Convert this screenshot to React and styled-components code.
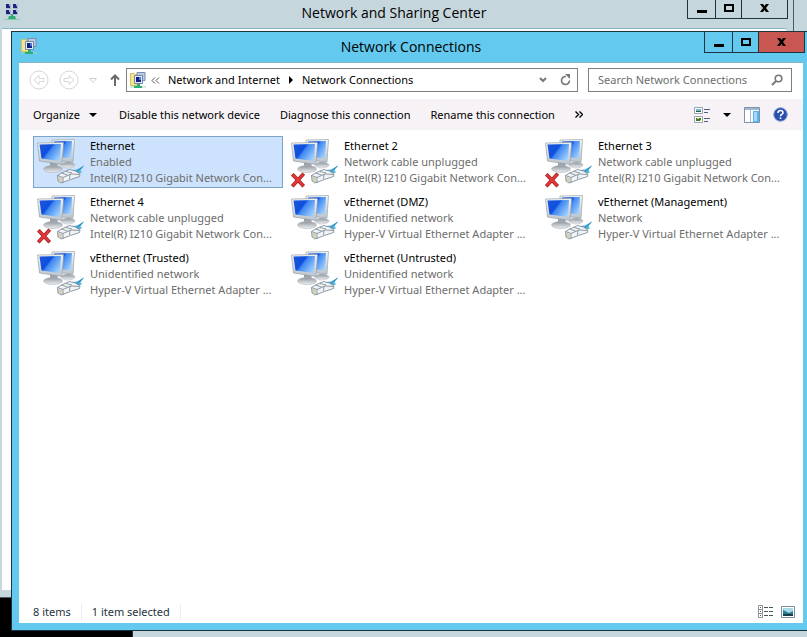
import React from 'react'
import styled, { createGlobalStyle, css } from 'styled-components'

const colors = {
    glass: '#c6d6dd',
    active: '#63c9ee',
    outline: '#1c3440',
    close: '#c75750',
    commandBar: '#f6f2f6',
    gray: '#6d6d6d',
}

const connections = [
    { name: 'Ethernet', status: 'Enabled', device: 'Intel(R) I210 Gigabit Network Con...', selected: true },
    { name: 'Ethernet 2', status: 'Network cable unplugged', device: 'Intel(R) I210 Gigabit Network Con...', unplugged: true },
    { name: 'Ethernet 3', status: 'Network cable unplugged', device: 'Intel(R) I210 Gigabit Network Con...', unplugged: true },
    { name: 'Ethernet 4', status: 'Network cable unplugged', device: 'Intel(R) I210 Gigabit Network Con...', unplugged: true },
    { name: 'vEthernet (DMZ)', status: 'Unidentified network', device: 'Hyper-V Virtual Ethernet Adapter ...' },
    { name: 'vEthernet (Management)', status: 'Network', device: 'Hyper-V Virtual Ethernet Adapter ...' },
    { name: 'vEthernet (Trusted)', status: 'Unidentified network', device: 'Hyper-V Virtual Ethernet Adapter ...' },
    { name: 'vEthernet (Untrusted)', status: 'Unidentified network', device: 'Hyper-V Virtual Ethernet Adapter ...' },
]

const GlobalStyle = createGlobalStyle`
    * {
        box-sizing: border-box;
    }

    body {
        margin: 0;
        background-color: #000;
        color: #000;
        font-family: "Noto Sans", "Open Sans", sans-serif;
        font-size: 11px;
        line-height: 16px;
    }

    button, input {
        font: inherit;
        color: inherit;
        margin: 0;
        padding: 0;
        border: 0;
        background: none;
    }

    svg {
        display: block;
        flex: none;
    }
`

const Desktop = styled.div`
    position: relative;
    height: 100vh;
    overflow: hidden;
`

const Window = styled.section`
    position: absolute;
    display: flex;
    flex-direction: column;
    border: 1px solid ${colors.outline};
    padding: 0 7px 7px;
    background-color: ${colors.glass};
`

const RearWindow = styled(Window)`
    top: -10px;
    right: -10px;
    bottom: -10px;
    left: 132px;
`

const SharingWindow = styled(Window)`
    top: -3px;
    right: 13px;
    bottom: 39px;
    left: -6px;
    border-color: #4d5c63;
`

const ConnectionsWindow = styled(Window)`
    top: 31px;
    right: -4px;
    bottom: 6px;
    left: 11px;
    background-color: ${colors.active};
`

const TitleBar = styled.header`
    display: grid;
    grid-template-columns: 1fr auto 1fr;
    height: 30px;
    flex: none;
`

const TitleIcon = styled.div`
    padding: 6px 2px;
`

const Title = styled.h1`
    margin: 0;
    font-family: "Open Sans", "Noto Sans", sans-serif;
    font-size: 14px;
    font-weight: 400;
    line-height: 30px;
`

const Caption = styled.div`
    display: flex;
    justify-self: end;
    align-self: start;
    height: 21px;
    margin-right: -2px;
    border: 1px solid ${colors.outline};
    border-top: 0;
`

const CaptionButton = styled.button`
    display: flex;
    align-items: center;
    justify-content: center;
    width: ${props => props.$wide ? '46px' : props.$mid ? '26px' : '27px'};
    background-color: ${props => props.$red ? colors.close : 'transparent'};

    & + & {
        border-left: 1px solid ${colors.outline};
    }
`

const Client = styled.div`
    display: flex;
    flex-direction: column;
    flex: 1;
    min-height: 0;
    border-top: 1px solid #86b4c6;
    background-color: #fff;
`

const NavBar = styled.nav`
    display: flex;
    align-items: center;
    height: 36px;
    padding: 0 11px 2px 10px;
    flex: none;
`

const NavButton = styled.button`
    display: flex;
    margin-right: ${props => props.$gap || '10px'};
`

const AddressBar = styled.div`
    display: flex;
    align-items: center;
    flex: 1;
    height: 24px;
    margin-right: 10px;
    padding: 0 6px 0 3px;
    border: 1px solid #7e7e82;
`

const Crumbs = styled.div`
    display: flex;
    align-items: center;
    flex: 1;
    gap: 8px;
    padding-left: 5px;
    white-space: nowrap;
`

const Crumb = styled.a`
    color: inherit;
    text-decoration: none;
`

const SearchBox = styled.label`
    display: flex;
    align-items: center;
    width: 204px;
    height: 24px;
    padding: 0 8px 0 9px;
    border: 1px solid #7e7e82;
`

const SearchInput = styled.input`
    flex: 1;
    min-width: 0;
    outline: none;

    &::placeholder {
        color: ${colors.gray};
        opacity: 1;
    }
`

const CommandBar = styled.div`
    display: flex;
    align-items: center;
    gap: 20px;
    height: 31px;
    padding: 0 15px 0 14px;
    background-color: ${colors.commandBar};
    white-space: nowrap;
    flex: none;
`

const Command = styled.button`
    display: flex;
    align-items: center;
    gap: 9px;
    margin-right: ${props => props.$menu ? '2px' : 0};
`

const ViewTools = styled.div`
    display: flex;
    align-items: center;
    gap: 13px;
    margin-left: auto;
`

const ConnectionList = styled.ul`
    display: grid;
    grid-template-columns: repeat(auto-fill, 250px);
    grid-auto-rows: 52px;
    gap: 4px;
    align-content: start;
    flex: 1;
    min-height: 0;
    margin: 0;
    padding: 6px 8px 6px 14px;
    list-style: none;
`

const ConnectionTile = styled.button`
    display: flex;
    gap: 5px;
    width: 100%;
    height: 52px;
    padding: 1px 6px 1px 3px;
    border: 1px solid transparent;
    text-align: left;

    ${props => props.$selected && css`
        border-color: #7ca6c8;
        background-color: #cde2fc;
    `}
`

const Lines = styled.span`
    flex: 1;
    min-width: 0;
`

const Line = styled.span`
    display: block;
    color: ${props => props.$strong ? '#000' : colors.gray};
    white-space: nowrap;
`

const StatusBar = styled.footer`
    display: flex;
    align-items: center;
    height: 23px;
    padding: 0 8px 0 14px;
    color: #1e3540;
    flex: none;
`

const StatusText = styled.span`
    margin-right: 10px;
    padding-right: 10px;
    border-right: 1px solid #ececf2;
`

const StatusViews = styled.div`
    display: flex;
    align-items: center;
    gap: 8px;
    margin-left: auto;
`

function FolderIcon() {
    return (
        <svg width="16" height="17" viewBox="0 0 16 17">
            <path d="M0.5 1.5h4l1 1h2v11h-7z" fill="#f5e68e" stroke="#d5bf62" />
            <path d="M7 .5h8v8H7z" fill="#bccbe2" stroke="#7a8eb2" />
            <path d="M4.500 3.500h8v8h-8z" fill="#e4ecf8" stroke="#7186ad" />
            <path d="M6 5h5v5H6z" fill="#151d86" />
            <path d="M9 5h2v3H9z" fill="#4c7cd2" />
            <path d="M7 12h3v2h2v2H4v-2h3z" fill="#2cae75" />
            <path d="M0 15h4M12 15h4" stroke="#a5d9c1" />
        </svg>
    )
}

function SharingIcon() {
    return (
        <svg width="16" height="17" viewBox="0 0 16 17">
            {[[2, 0], [9, 0], [2, 6], [9, 6]].map(([x, y]) => (
                <g key={`${x}-${y}`}>
                    <path d={`M${x} ${y}h5v5h-5z`} fill="#a8b3d4" />
                    <path d={`M${x} ${y}h3v2h1v2h-4z`} fill="#1c2378" />
                </g>
            ))}
            <path d="M7 10h2v2h2l1 3H4l1-3h2z" fill="#2cae75" />
            <path d="M0 15.500h16" stroke="#8cc9ad" />
        </svg>
    )
}

function NetworkIcon({ id, unplugged }) {
    return (
        <svg width="48" height="50" viewBox="0 0 48 50">
            <defs>
                <linearGradient id={`screen-${id}`} x1="0" y1="0.1" x2="1" y2="0.7">
                    <stop offset="0" stopColor="#1a56d8" />
                    <stop offset="0.42" stopColor="#0f4fe0" />
                    <stop offset="0.5" stopColor="#3f86f2" />
                    <stop offset="1" stopColor="#9fd0fc" />
                </linearGradient>
                <linearGradient id={`frame-${id}`} x1="0" y1="0" x2="0" y2="1">
                    <stop offset="0" stopColor="#f4f6f7" />
                    <stop offset="1" stopColor="#bcc4ca" />
                </linearGradient>
                <linearGradient id={`stand-${id}`} x1="0" y1="0" x2="0" y2="1">
                    <stop offset="0" stopColor="#8e969c" />
                    <stop offset="1" stopColor="#eef0f2" />
                </linearGradient>
            </defs>
            <ellipse cx="31" cy="27" rx="7" ry="3" fill={`url(#stand-${id})`} stroke="#b4babf" strokeWidth="0.500" />
            <path d="M15 2l22.500-.5-1.500 22.500-20-2z" fill={`url(#frame-${id})`} stroke="#9aa4ac" strokeWidth="0.700" />
            <path d="M17 3.500l18-.5-1 17.500-17-2z" fill={`url(#screen-${id})`} />
            <path d="M13 24h7l1 6h-8z" fill="#9aa2a8" />
            <ellipse cx="16" cy="31" rx="9.500" ry="3.500" fill={`url(#stand-${id})`} stroke="#aeb5ba" strokeWidth="0.600" />
            <path d="M.5 5l26-.5-1.500 22-22.500-3.500z" fill={`url(#frame-${id})`} stroke="#98a2aa" strokeWidth="0.700" />
            <path d="M2.500 6.500l21.500-.5-1 17-18.500-2.500z" fill={`url(#screen-${id})`} />
            <path d="M35 32l5-.5 6.500-3.500-3 4.500 1.500 2-5 1z" fill="#4fb0dc" />
            <path d="M39 34l7.500-6" stroke="#2387bb" />
            <path d="M20.500 37.500l4-2.500 8-3.500 6 1.500 4.500 3-.5 2.500-9 3-9.500 3.500-3-2z" fill="#f0f4f7" stroke="#75838f" strokeWidth="0.800" />
            <path d="M20.500 37.500l5.500 2v5.500M26 39.500l8-3.500 8.500 .5M24.500 35l6 2M33 36l-.5 5M29 33.500l6 1.500" fill="none" stroke="#75838f" strokeWidth="0.800" />
            <path d="M22 39v4M24 39.500v4.500" stroke="#b59b5a" strokeWidth="0.800" />
            {unplugged && (
                <g fill="none" strokeLinecap="square">
                    <path d="M2.500 37.500l9 9.500M11.500 37l-9 10" stroke="#9f1c1c" strokeWidth="3.600" />
                    <path d="M2.500 37.500l9 9.500M11.500 37l-9 10" stroke="#e5383a" strokeWidth="2.200" />
                </g>
            )}
        </svg>
    )
}

function ArrowCircle({ flip }) {
    return (
        <svg width="20" height="20" viewBox="0 0 20 20" fill="none" stroke="#d6d6d6">
            <circle cx="10" cy="10" r="9" />
            <path
                d={flip ? 'M15 10l-5-4.500v3H5v3h5v3z' : 'M5 10l5-4.500v3h5v3h-5v3z'}
            />
        </svg>
    )
}

function DownTriangle() {
    return (
        <svg width="8" height="4" viewBox="0 0 8 4">
            <path d="M0 0h8L4 4z" fill="#000" />
        </svg>
    )
}

function CaptionButtons({ active, label }) {
    return (
        <Caption>
            <CaptionButton aria-label={`Minimize ${label}`}>
                <svg width="10" height="11" viewBox="0 0 10 11">
                    <path d="M0 7h10v3H0z" />
                </svg>
            </CaptionButton>
            <CaptionButton $mid aria-label={`Maximize ${label}`}>
                <svg width="10" height="8" viewBox="0 0 10 8">
                    <path d="M1 1h8v6H1z" fill="none" stroke="#000" strokeWidth="2" />
                </svg>
            </CaptionButton>
            <CaptionButton $wide $red={active} aria-label={`Close ${label}`}>
                <svg width="9" height="8" viewBox="0 0 9 8">
                    <path d="M0 0h3l1.500 2L6 0h3L6 4l3 4H6L4.500 6 3 8H0l3-4z" />
                </svg>
            </CaptionButton>
        </Caption>
    )
}

function ConnectionItem({ id, name, status, device, selected, unplugged }) {
    return (
        <li>
            <ConnectionTile $selected={selected} aria-pressed={!!selected}>
                <NetworkIcon id={id} unplugged={unplugged} />
                <Lines>
                    <Line $strong>{name}</Line>
                    <Line>{status}</Line>
                    <Line>{device}</Line>
                </Lines>
            </ConnectionTile>
        </li>
    )
}

function Navigation() {
    return (
        <NavBar>
            <NavButton aria-label="Back"><ArrowCircle /></NavButton>
            <NavButton aria-label="Forward"><ArrowCircle flip /></NavButton>
            <NavButton $gap="13px" aria-label="Recent locations">
                <svg width="8" height="5" viewBox="0 0 8 5" fill="none" stroke="#cfcfcf">
                    <path d="M.5 .5h7L4 4.500z" />
                </svg>
            </NavButton>
            <NavButton $gap="6px" aria-label="Up">
                <svg width="10" height="12" viewBox="0 0 10 12" fill="none" stroke="#6b6b6b" strokeWidth="2">
                    <path d="M5 12V1.500M1 5.500l4-4 4 4" />
                </svg>
            </NavButton>
            <AddressBar>
                <FolderIcon />
                <Crumbs>
                    <svg width="9" height="7" viewBox="0 0 9 7" fill="none" stroke="#555">
                        <path d="M4 .5l-3 3 3 3M8 .5l-3 3 3 3" />
                    </svg>
                    <Crumb href="#network">Network and Internet</Crumb>
                    <svg width="6" height="8" viewBox="0 0 6 8">
                        <path d="M1 0l4 4-4 4z" />
                    </svg>
                    <Crumb href="#connections">Network Connections</Crumb>
                </Crumbs>
                <NavButton $gap="13px" aria-label="Previous locations">
                    <svg width="8" height="6" viewBox="0 0 8 6" fill="none" stroke="#777" strokeWidth="2">
                        <path d="M1 1l3 3 3-3" />
                    </svg>
                </NavButton>
                <NavButton $gap="0" aria-label="Refresh">
                    <svg width="11" height="12" viewBox="0 0 11 12">
                        <path d="M6 2.500A4 4 0 1 0 9.500 6.500" fill="none" stroke="#777" strokeWidth="1.600" />
                        <path d="M5 0h5v5z" fill="#777" />
                    </svg>
                </NavButton>
            </AddressBar>
            <SearchBox>
                <SearchInput type="text" placeholder="Search Network Connections" aria-label="Search Network Connections" />
                <svg width="12" height="12" viewBox="0 0 12 12" fill="none" stroke="#777">
                    <circle cx="7.500" cy="4.500" r="3.300" strokeWidth="1.600" />
                    <path d="M5 7l-4 4" strokeWidth="2" />
                </svg>
            </SearchBox>
        </NavBar>
    )
}

function Commands() {
    return (
        <CommandBar>
            <Command $menu>
                Organize
                <DownTriangle />
            </Command>
            <Command>Disable this network device</Command>
            <Command>Diagnose this connection</Command>
            <Command>Rename this connection</Command>
            <Command aria-label="More commands">
                <svg width="8" height="7" viewBox="0 0 8 7" fill="none" stroke="#000" strokeWidth="1.400">
                    <path d="M.5 .5l3 3-3 3M4.500 .5l3 3-3 3" />
                </svg>
            </Command>
            <ViewTools>
                <Command aria-label="Change your view">
                    <svg width="16" height="16" viewBox="0 0 16 16">
                        <path d="M.5 .5h8v6h-8zM.5 9.500h8v6h-8z" fill="#fff" stroke="#9aa5b0" />
                        <path d="M2 2h5v2H2z" fill="#77b5dc" />
                        <path d="M2 4h5v1H2z" fill="#25642f" />
                        <path d="M2 11h5v3H2z" fill="#3e7a2c" />
                        <path d="M3 11h2v1H3zM6 13h1v1H6z" fill="#e0d94e" />
                        <path d="M10 2.500h6M10 5.500h4M10 11.500h6M10 14.500h4" stroke="#4f6183" />
                    </svg>
                </Command>
                <Command aria-label="More view options"><DownTriangle /></Command>
                <Command aria-label="Show the preview pane">
                    <svg width="16" height="16" viewBox="0 0 16 16">
                        <path d="M.5 .5h15v15H.5z" fill="#fff" stroke="#7c93ab" />
                        <path d="M1 1h14v2H1z" fill="#9db8d0" />
                        <path d="M6.500 3v12" stroke="#a6b8c8" />
                        <path d="M9 4h6v11H9z" fill="#5ab3ee" />
                        <path d="M10 5h3v9h-3z" fill="#a6daf8" />
                    </svg>
                </Command>
                <Command aria-label="Get help">
                    <svg width="15" height="15" viewBox="0 0 15 15">
                        <circle cx="7.500" cy="7.500" r="6.800" fill="#2a4fae" stroke="#8ba2d3" />
                        <path d="M5 6q0-2.500 2.500-2.500T10 5.700q0 1-1.300 1.700T7.500 9.200M7.500 10.500v1.500" fill="none" stroke="#fff" strokeWidth="1.600" />
                    </svg>
                </Command>
            </ViewTools>
        </CommandBar>
    )
}

function Status() {
    return (
        <StatusBar>
            <StatusText>{connections.length} items</StatusText>
            <StatusText>1 item selected</StatusText>
            <StatusViews>
                <Command aria-label="Details view">
                    <svg width="15" height="13" viewBox="0 0 15 13" fill="none">
                        <path d="M.5 .5h4v4h-4zM.5 4.500h4v4h-4zM.5 8.500h4v4h-4z" stroke="#8c9398" />
                        <path d="M2 2.500h1M2 6.500h1M2 10.500h1M6 2.500h4M11 2.500h4M6 6.500h4M11 6.500h4M6 10.500h4M11 10.500h4" stroke="#4b555b" />
                    </svg>
                </Command>
                <Command aria-label="Large icons view">
                    <svg width="14" height="12" viewBox="0 0 14 12">
                        <path d="M.5 .5h13v11H.5z" fill="#fff" stroke="#76909c" />
                        <path d="M2 2h10v8H2z" fill="#2a7c92" />
                        <path d="M2 2h10v3l-4 2-6-3z" fill="#a8dae8" />
                        <path d="M2 8h10v2H2z" fill="#173f50" />
                    </svg>
                </Command>
            </StatusViews>
        </StatusBar>
    )
}

function App() {
    return (
        <>
            <GlobalStyle />
            <Desktop>
                <RearWindow />
                <SharingWindow>
                    <TitleBar>
                        <TitleIcon><SharingIcon /></TitleIcon>
                        <Title>Network and Sharing Center</Title>
                        <CaptionButtons label="Network and Sharing Center" />
                    </TitleBar>
                    <Client />
                </SharingWindow>
                <ConnectionsWindow>
                    <TitleBar>
                        <TitleIcon><FolderIcon /></TitleIcon>
                        <Title>Network Connections</Title>
                        <CaptionButtons active label="Network Connections" />
                    </TitleBar>
                    <Client>
                        <Navigation />
                        <Commands />
                        <ConnectionList>
                            {connections.map((connection, i) => (
                                <ConnectionItem key={connection.name} id={i} {...connection} />
                            ))}
                        </ConnectionList>
                        <Status />
                    </Client>
                </ConnectionsWindow>
            </Desktop>
        </>
    )
}

export default App
